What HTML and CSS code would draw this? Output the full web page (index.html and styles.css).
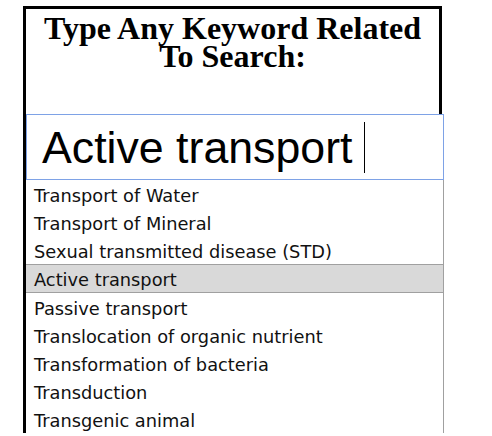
FILE: index.html
```html
<!DOCTYPE html>
<html>
<head>
<meta charset="utf-8">
<link rel="stylesheet" href="styles.css">
</head>
<body>
<div class="panel">
  <div class="header">
    <h1 class="title"><span class="title-line">Type Any Keyword Related</span><span class="title-line">To Search:</span></h1>
  </div>
  <div class="search">
    <span class="query">Active transport</span>
    <span class="caret"></span>
  </div>
  <ul class="list">
    <li class="item">Transport of Water</li>
    <li class="item">Transport of Mineral</li>
    <li class="item">Sexual transmitted disease (STD)</li>
    <li class="item item-active">Active transport</li>
    <li class="item">Passive transport</li>
    <li class="item">Translocation of organic nutrient</li>
    <li class="item">Transformation of bacteria</li>
    <li class="item">Transduction</li>
    <li class="item">Transgenic animal</li>
  </ul>
</div>
</body>
</html>
```
FILE: styles.css
```css
html, body {
  margin: 0;
  padding: 0;
  background: #fff;
  overflow: hidden;
}
.panel {
  margin: 6px 0 0 23px;
  border-left: 3px solid #000;
  width: 418px;
}
.header {
  box-sizing: border-box;
  width: 416px;
  height: 108px;
  border-top: 3px solid #000;
  border-right: 3px solid #000;
  padding-top: 5px;
}
.title {
  margin: 0;
  font-family: "Liberation Serif", "Times New Roman", serif;
  font-weight: bold;
  font-size: 32px;
  line-height: 28px;
  text-align: center;
  color: #000;
}
.title-line {
  display: block;
  height: 28px;
}
.search {
  box-sizing: border-box;
  width: 418px;
  height: 66px;
  border: 1px solid #7ea2e6;
  padding-left: 15px;
  display: flex;
  align-items: center;
  font-family: "Liberation Sans", Arial, sans-serif;
  font-size: 44.7px;
  color: #000;
}
.query {
  line-height: 51px;
}
.caret {
  width: 1px;
  height: 51px;
  background: #000;
  margin-left: 12px;
}
.list {
  list-style: none;
  margin: 0;
  padding: 0;
  width: 418px;
  box-sizing: border-box;
  border-right: 1px solid #a0a0a0;
  font-family: "DejaVu Sans", Verdana, sans-serif;
  font-size: 17.8px;
  color: #111;
}
.item {
  box-sizing: border-box;
  height: 28px;
  padding: 4px 0 0 8px;
  line-height: 24px;
  white-space: nowrap;
}
.item-active {
  height: 29px;
  padding-top: 3px;
  background: #d9d9d9;
  border-top: 1px solid #a0a0a0;
  border-bottom: 1px solid #a0a0a0;
}
```
